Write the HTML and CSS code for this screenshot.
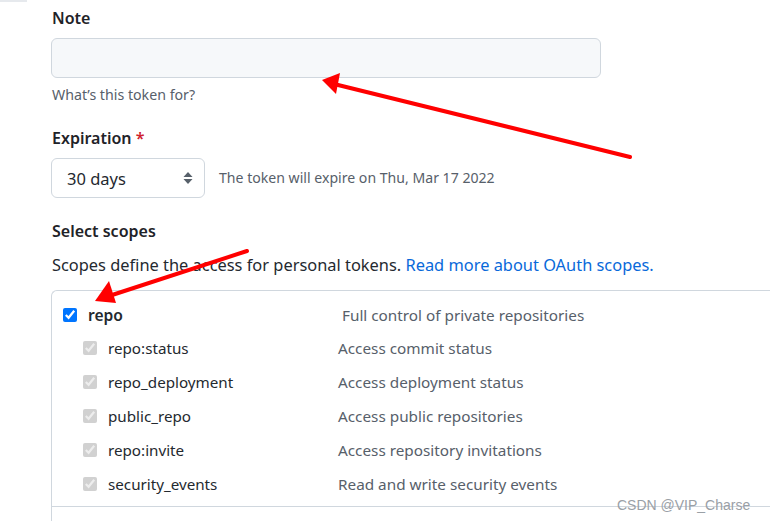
FILE: index.html
```html
<!DOCTYPE html>
<html lang="en">
<head>
<meta charset="utf-8">
<title>New personal access token</title>
<link rel="stylesheet" href="styles.css">
</head>
<body>
<div class="page">
  <div class="nav-edge"></div>
  <form class="token-form">
    <div class="field">
      <label class="field-label" for="note">Note</label>
      <input class="text-input" id="note" type="text">
      <p class="note">What’s this token for?</p>
    </div>

    <div class="field">
      <label class="field-label field-label-exp" for="exp">Expiration <span class="req">*</span></label>
      <div class="exp-row">
        <span class="select-wrap">
          <select class="select" id="exp">
            <option>30 days</option>
          </select>
          <svg class="select-caret" width="10" height="14" viewBox="0 0 10 14" aria-hidden="true">
            <path d="M5 1 L9.5 6 L0.5 6 Z" fill="#57606a"/>
            <path d="M5 13 L9.5 8 L0.5 8 Z" fill="#57606a"/>
          </svg>
        </span>
        <span class="note exp-note">The token will expire on Thu, Mar 17 2022</span>
      </div>
    </div>

    <div class="field">
      <h3 class="field-label scopes-title">Select scopes</h3>
      <p class="scopes-desc">Scopes define the access for personal tokens. <a href="#">Read more about OAuth scopes.</a></p>
    </div>

    <div class="scopes-box">
      <div class="scope-group">
        <div class="scope-row parent">
          <label class="scope-main"><input type="checkbox" checked class="cb"><span class="scope-name strong">repo</span></label>
          <span class="scope-desc">Full control of private repositories</span>
        </div>
        <div class="scope-row child">
          <label class="scope-main"><input type="checkbox" checked disabled class="cb"><span class="scope-name">repo:status</span></label>
          <span class="scope-desc">Access commit status</span>
        </div>
        <div class="scope-row child">
          <label class="scope-main"><input type="checkbox" checked disabled class="cb"><span class="scope-name">repo_deployment</span></label>
          <span class="scope-desc">Access deployment status</span>
        </div>
        <div class="scope-row child">
          <label class="scope-main"><input type="checkbox" checked disabled class="cb"><span class="scope-name">public_repo</span></label>
          <span class="scope-desc">Access public repositories</span>
        </div>
        <div class="scope-row child">
          <label class="scope-main"><input type="checkbox" checked disabled class="cb"><span class="scope-name">repo:invite</span></label>
          <span class="scope-desc">Access repository invitations</span>
        </div>
        <div class="scope-row child">
          <label class="scope-main"><input type="checkbox" checked disabled class="cb"><span class="scope-name">security_events</span></label>
          <span class="scope-desc">Read and write security events</span>
        </div>
      </div>
      <div class="scope-group next"></div>
    </div>
  </form>

  <svg class="annot" width="770" height="521" viewBox="0 0 770 521" aria-hidden="true">
    <line x1="630" y1="157" x2="334" y2="84" stroke="#f00" stroke-width="4" stroke-linecap="round"/>
    <polygon points="322,80 340,73 336,94" fill="#f00"/>
    <line x1="247" y1="251" x2="106" y2="297" stroke="#f00" stroke-width="4" stroke-linecap="round"/>
    <polygon points="95,301 109,281 116,303" fill="#f00"/>
  </svg>
  <div class="watermark">CSDN @VIP_Charse</div>
</div>
</body>
</html>
```

FILE: styles.css
```css
* { box-sizing: border-box; }

html, body {
  margin: 0;
  padding: 0;
  overflow: hidden;
  background: #ffffff;
}

body {
  font-family: "Noto Sans", "Open Sans", sans-serif;
  color: #24292f;
  font-size: 16px;
}

.page {
  position: relative;
  width: 770px;
  height: 521px;
  overflow: hidden;
}

.nav-edge {
  width: 27px;
  height: 2px;
  background: #e6e9ed;
}

.token-form {
  padding-left: 51px;
  width: 860px;
}

.field { margin: 0; }

.field-label {
  display: block;
  margin: 6px 0 0 1px;
  font-size: 16px;
  line-height: 20px;
  font-weight: 600;
  color: #1f2328;
}

.text-input {
  display: block;
  margin-top: 10px;
  width: 550px;
  height: 40px;
  border: 1px solid #d0d7de;
  border-radius: 6px;
  background: #f6f8fa;
  font: inherit;
  padding: 0 12px;
}

.note {
  margin: 9px 0 0 1px;
  font-size: 14.2px;
  line-height: 16px;
  color: #57606a;
}

.field-label-exp { margin-top: 25px; }

.req { color: #cf222e; }

.exp-row {
  display: flex;
  align-items: center;
  margin-top: 10px;
  gap: 14px;
}

.select-wrap {
  position: relative;
  display: inline-block;
}

.select {
  appearance: none;
  -webkit-appearance: none;
  width: 154px;
  height: 40px;
  border: 1px solid #d0d7de;
  border-radius: 6px;
  background: #ffffff;
  font: inherit;
  font-size: 16.5px;
  color: #24292f;
  padding: 0 0 0 15px;
}

.select-caret {
  position: absolute;
  right: 12px;
  top: 13px;
}

.exp-note { margin: 0; font-size: 14.1px; }

.scopes-title { margin-top: 23px; }

.scopes-desc {
  margin: 12px 0 0 1px;
  line-height: 24px;
  font-size: 16.4px;
}

.scopes-desc a {
  color: #0969da;
  text-decoration: none;
}

.scopes-box {
  margin-top: 13px;
  border-top: 1px solid #d0d7de;
  border-left: 1px solid #d0d7de;
  border-top-left-radius: 6px;
  width: 760px;
}

.scope-group {
  padding: 8px 0 5px 0;
  border-bottom: 1px solid #d0d7de;
}

.scope-group.next {
  height: 60px;
  border-bottom: 0;
}

.scope-row {
  display: flex;
  align-items: center;
  height: 34px;
}

.scope-row.parent {
  height: 32px;
  padding-left: 11px;
}

.scope-row.child { padding-left: 31px; }

.scope-main {
  display: flex;
  align-items: center;
  gap: 11px;
}

.parent .scope-main { width: 279px; }
.child .scope-main { width: 255px; }

.cb {
  width: 14px;
  height: 14px;
  margin: 0;
}

.scope-name {
  font-size: 15.2px;
  color: #24292f;
}

.scope-name.strong { font-weight: 600; font-size: 15.6px; }

.scope-desc {
  font-size: 15.3px;
  color: #57606a;
}

.annot {
  position: absolute;
  left: 0;
  top: 0;
  pointer-events: none;
}

.watermark {
  position: absolute;
  left: 617px;
  top: 496px;
  font-family: "Liberation Sans", Arial, sans-serif;
  font-size: 14px;
  line-height: 18px;
  color: #9aa0a6;
}
```
